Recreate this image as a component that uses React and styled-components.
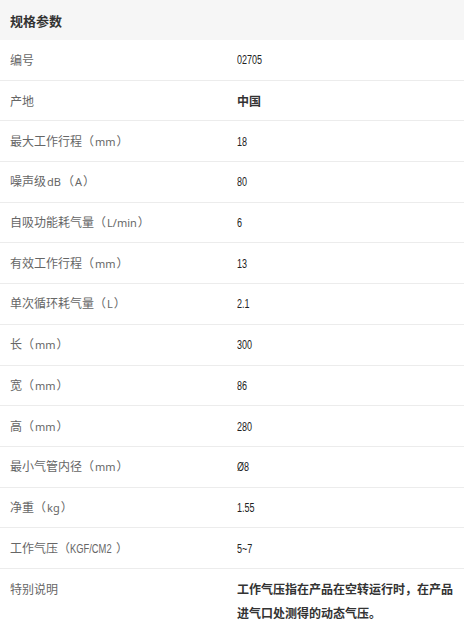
import React from 'react';
import styled, { createGlobalStyle } from 'styled-components';

const GlobalStyle = createGlobalStyle`
  body {
    margin: 0;
    background: #fff;
    font-family: "Noto Sans CJK SC", "Noto Sans", sans-serif;
  }
`;

const SpecTable = styled.section`
  width: 464px;
  background: #fff;
`;

const Title = styled.div`
  height: 40px;
  display: flex;
  align-items: center;
  padding-left: 10px;
  background: #f6f6f6;
  font-size: 13px;
  font-weight: 700;
  color: #333;
`;

const Row = styled.div`
  display: grid;
  grid-template-columns: 237px 1fr;
  box-sizing: border-box;
  min-height: 40.7px;
  align-items: ${({ $tall }) => ($tall ? 'start' : 'center')};
  padding: ${({ $tall }) => ($tall ? '8px 0' : '0')};
  border-bottom: ${({ $last }) => ($last ? 'none' : '1px solid #ececec')};
`;

const Label = styled.div`
  padding-left: 10px;
  font-size: 12px;
  line-height: 24px;
  color: #666;
`;

const Unit = styled.span`
  font-family: "Noto Sans", "Noto Sans CJK SC", sans-serif;
  font-size: 11px;
  margin: 0 1px;
`;

/* narrow numeric face, squeezed since no condensed font is installed */
const Narrow = styled.span`
  display: inline-block;
  font-family: "Liberation Sans", "Noto Sans CJK SC", sans-serif;
  font-size: ${({ $size }) => $size || '12.5px'};
  transform: scaleX(${({ $scale }) => $scale || 0.72});
  transform-origin: left center;
  width: ${({ $w }) => $w || 'auto'};
`;

const Value = styled.div`
  padding-right: 8px;
  font-size: 12px;
  line-height: 24px;
  color: ${({ $cjk }) => ($cjk ? '#333' : '#222')};
  font-weight: ${({ $cjk }) => ($cjk ? 700 : 400)};
`;

const specs = [
  { name: '编号', value: '02705' },
  { name: '产地', value: '中国', cjk: true },
  { name: '最大工作行程', unit: 'mm', value: '18' },
  { name: '噪声级', pre: 'dB', unit: 'A', value: '80' },
  { name: '自吸功能耗气量', unit: 'L/min', value: '6' },
  { name: '有效工作行程', unit: 'mm', value: '13' },
  { name: '单次循环耗气量', unit: 'L', value: '2.1' },
  { name: '长', unit: 'mm', value: '300' },
  { name: '宽', unit: 'mm', value: '86' },
  { name: '高', unit: 'mm', value: '280' },
  { name: '最小气管内径', unit: 'mm', value: 'Ø8' },
  { name: '净重', unit: 'kg', value: '1.55' },
  { name: '工作气压', unit: 'KGF/CM2', narrow: true, value: '5~7' },
];

export default function App() {
  return (
    <>
      <GlobalStyle />
      <SpecTable>
        <Title>规格参数</Title>
        {specs.map((s) => (
          <Row key={s.name}>
            <Label>
              {s.name}
              {s.pre && <Unit>{s.pre}</Unit>}
              {s.unit && (
                <>
                  （
                  {s.narrow ? (
                    <Narrow $size="12px" $scale={0.78} $w="46px">{s.unit}</Narrow>
                  ) : (
                    <Unit>{s.unit}</Unit>
                  )}
                  ）
                </>
              )}
            </Label>
            <Value $cjk={s.cjk}>
              {s.cjk ? s.value : <Narrow>{s.value}</Narrow>}
            </Value>
          </Row>
        ))}
        <Row $tall $last>
          <Label>特别说明</Label>
          <Value $cjk>工作气压指在产品在空转运行时，在产品进气口处测得的动态气压。</Value>
        </Row>
      </SpecTable>
    </>
  );
}
